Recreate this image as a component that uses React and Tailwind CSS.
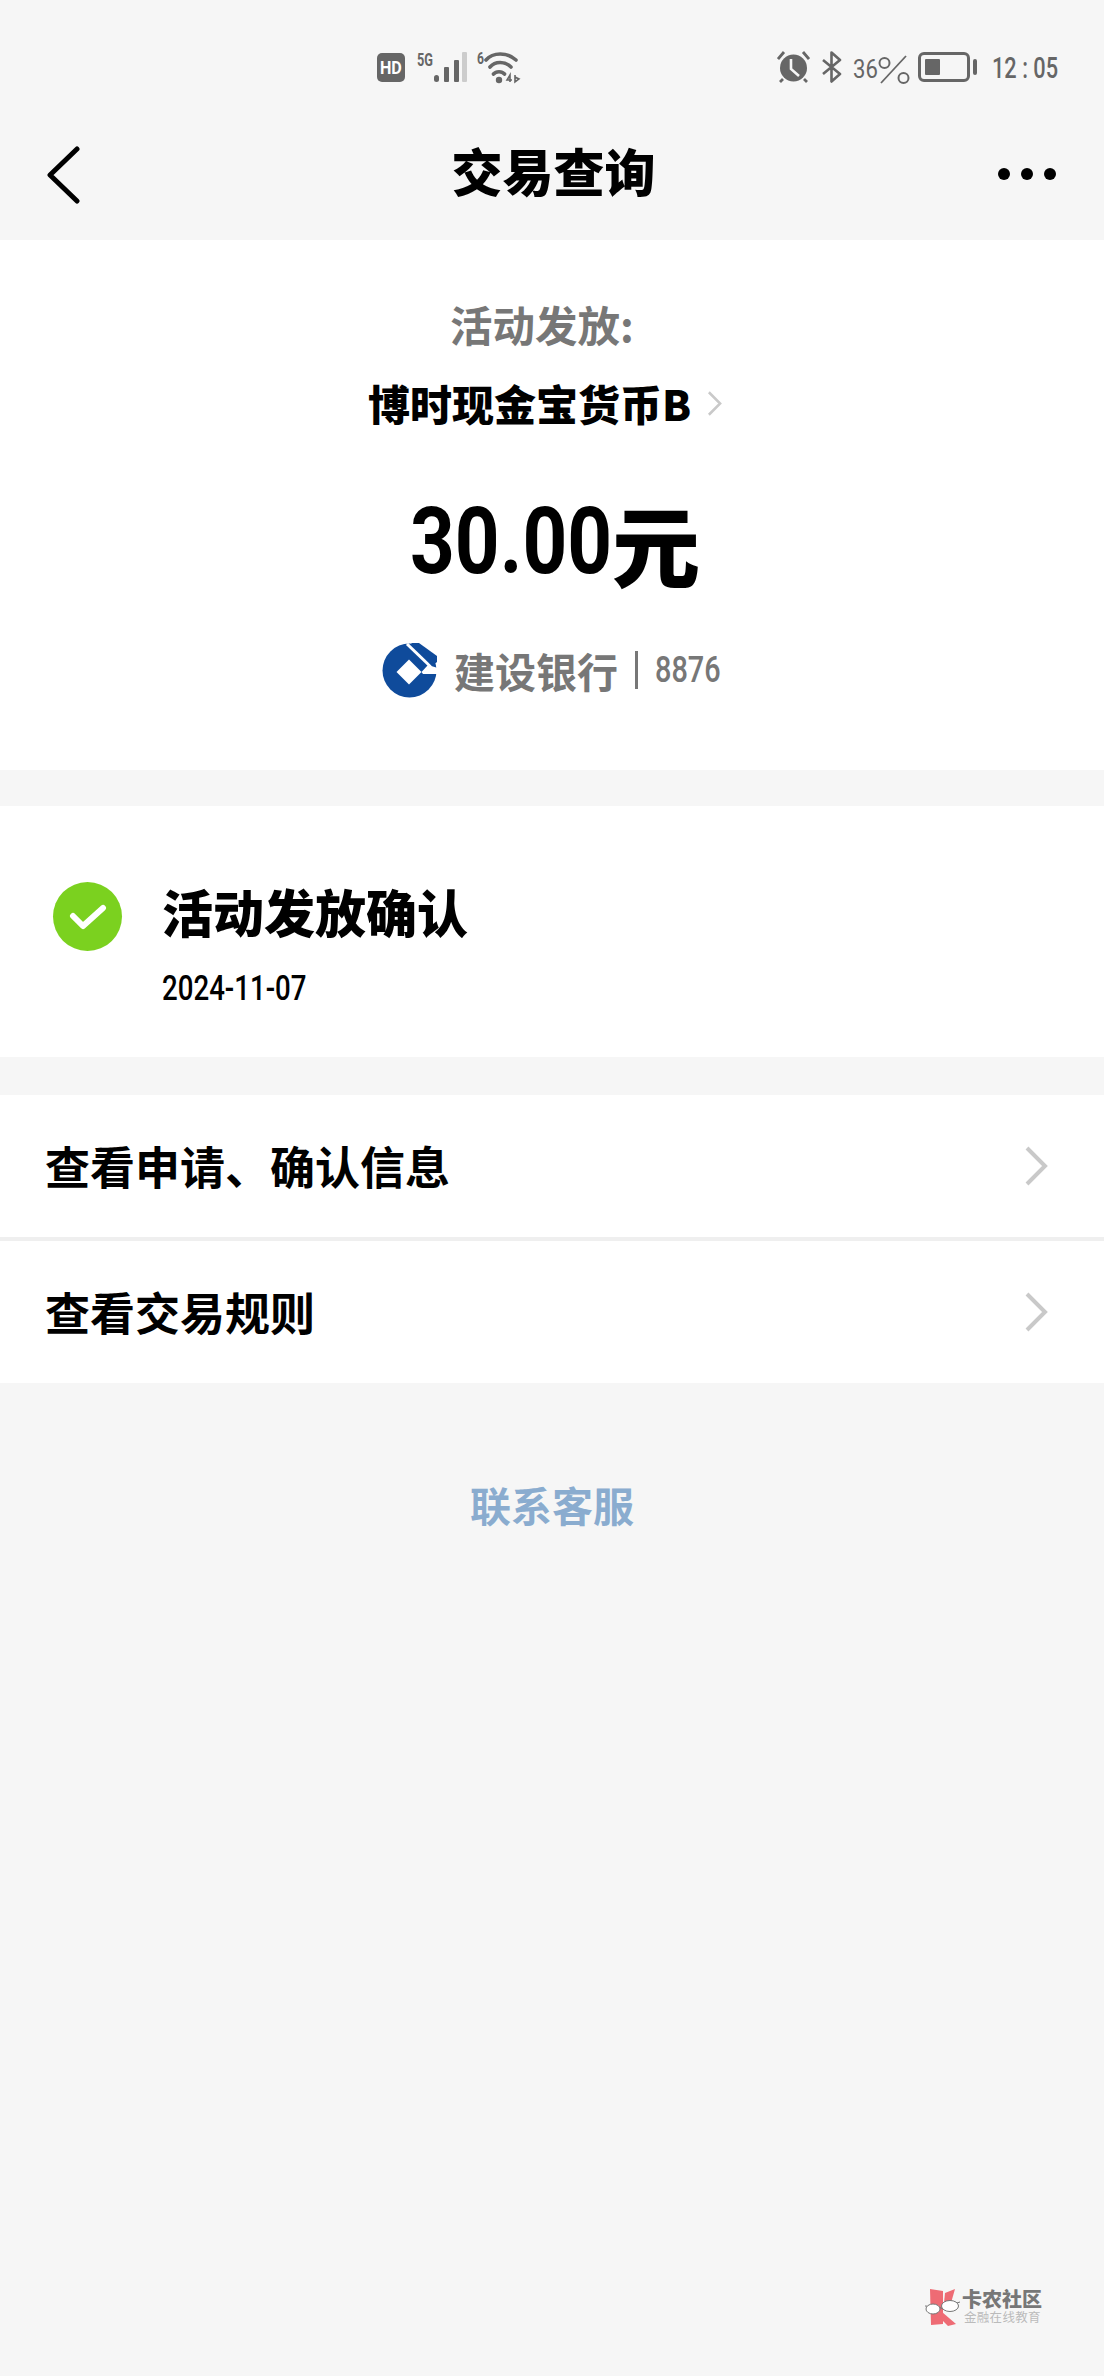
import React from 'react';

const cjk = "font-['Noto_Sans_CJK_SC','Noto_Sans',sans-serif]";
const digits = "font-['Roboto','Liberation_Sans','Noto_Sans_CJK_SC',sans-serif]";

// digits in the shot are condensed, so they get squeezed into a fixed width box
const Squeezed = ({ width, className, children }) => (
  <span className={`block overflow-visible whitespace-pre ${width}`}>
    <span className={`inline-block origin-left ${className}`}>{children}</span>
  </span>
);

const StatusBar = () => (
  <div className={`h-[96px] flex items-start pt-[51px] text-[#666] ${digits}`}>
    <div className="ml-[377px] mt-[2px] w-[28px] h-[29px] rounded-[5px] bg-[#666] text-white flex items-center justify-center">
      <span className="text-[19px] font-bold leading-[29px] scale-x-[0.85]">HD</span>
    </div>
    <svg className="ml-[12px] mt-[1px] overflow-visible" width="51" height="31" viewBox="0 0 51 31">
      <text x="0" y="14" fontSize="19" fontWeight="700" fill="#666" textLength="16" lengthAdjust="spacingAndGlyphs">5G</text>
      <rect x="17" y="23" width="5" height="7" rx="2.5" fill="#666" />
      <rect x="27" y="15" width="5" height="15" rx="1" fill="#666" />
      <rect x="37" y="8" width="5" height="22" rx="1" fill="#666" />
      <rect x="45" y="0" width="5" height="30" rx="1" fill="#ccc" />
    </svg>
    <svg className="ml-[9px] mt-[1px] overflow-visible" width="43" height="32" viewBox="0 0 43 32">
      <text x="0" y="12" fontSize="16" fontWeight="700" fill="#666" textLength="7" lengthAdjust="spacingAndGlyphs">6</text>
      <path d="M9 8 C16 0 30 0 39 8 M13 15 C18 9 28 9 34 15 M16.5 22 C19 19 25 19 27.5 22" fill="none" stroke="#666" strokeWidth="3.6" strokeLinecap="round" />
      <circle cx="22" cy="28" r="3.2" fill="#666" />
      <path d="M33 30 L33 23 L30 28 L35 28 M38 23 L38 30 L42 27 L38 25" fill="none" stroke="#666" strokeWidth="1.6" />
    </svg>
    <svg className="ml-[257px]" width="33" height="32" viewBox="0 0 33 32">
      <circle cx="16.5" cy="17" r="13.5" fill="#666" />
      <path d="M14 8 L14 18 L22 25" fill="none" stroke="#f6f6f6" strokeWidth="2.6" />
      <path d="M1 8 L7 1 M32 8 L26 1 M6 28 L3 31 M27 28 L30 31" stroke="#666" strokeWidth="2.8" />
    </svg>
    <svg className="ml-[11px]" width="21" height="32" viewBox="0 0 21 32">
      <path d="M2 9 L19 23 L10.5 30.5 L10.5 1.5 L19 9 L2 23" fill="none" stroke="#666" strokeWidth="2.6" strokeLinejoin="round" />
    </svg>
    <div className="ml-[11px] mt-[3px]">
      <Squeezed width="w-[25px]" className="text-[26px] leading-[30px] scale-x-[0.85]">36</Squeezed>
    </div>
    <svg className="mt-[3px]" width="32" height="30" viewBox="0 0 32 30">
      <circle cx="6.5" cy="9" r="5" fill="none" stroke="#666" strokeWidth="2" />
      <circle cx="25.5" cy="24" r="5" fill="none" stroke="#666" strokeWidth="2" />
      <path d="M28 2 L3 29" stroke="#666" strokeWidth="1.8" />
    </svg>
    <div className="ml-[8px] mt-[1px] w-[52px] h-[30px] rounded-[6px] border-[3px] border-[#666] p-[4px]">
      <div className="w-[15px] h-full bg-[#666] rounded-[1px]" />
    </div>
    <div className="ml-[3px] mt-[8px] w-[4px] h-[16px] bg-[#666] rounded-sm" />
    <div className="ml-[15px] mt-[2px]">
      <Squeezed width="w-[65px]" className="text-[29px] font-medium leading-[30px] scale-x-[0.75]">12 : 05</Squeezed>
    </div>
  </div>
);

const NavBar = () => (
  <div className="h-[144px] flex items-center pl-[46px] pr-[48px]">
    <div className="flex-1">
      <svg width="34" height="60" viewBox="0 0 34 60" className="mt-[14px]">
        <path d="M31 4 L4 30 L31 56" fill="none" stroke="#000" strokeWidth="5" strokeLinecap="round" strokeLinejoin="round" />
      </svg>
    </div>
    <div className={`${cjk} ml-[5px] text-[51px] font-black leading-[60px] text-black mt-[4px]`}>交易查询</div>
    <div className="flex-1 flex justify-end gap-[11px] mt-[12px]">
      <div className="w-[12px] h-[12px] rounded-full bg-black" />
      <div className="w-[12px] h-[12px] rounded-full bg-black" />
      <div className="w-[12px] h-[12px] rounded-full bg-black" />
    </div>
  </div>
);

const Chevron = ({ w = 24, h = 40, stroke = 4 }) => (
  <svg width={w} height={h} viewBox="0 0 24 40">
    <path d="M3 2 L21 20 L3 38" fill="none" stroke="#c9c9c9" strokeWidth={stroke} />
  </svg>
);

const BankLogo = () => (
  <svg width="55" height="55" viewBox="0 0 55 55">
    <circle cx="27.5" cy="27.5" r="27" fill="#0f4b9b" />
    <path d="M27 16.5 L39.5 29 L27 41.5 L14.5 29 Z" fill="#fff" />
    <path d="M25 1 L49 24" fill="none" stroke="#fff" strokeWidth="3" />
    <path d="M39.5 29 L46 22 L56 25 L56 31 L41 31 Z" fill="#fff" />
    <path d="M29 0 L37 0 L55 13 L55 19 L50 23 Z" fill="#0f4b9b" />
  </svg>
);

const Row = ({ label }) => (
  <div className="h-[142px] bg-white flex items-center justify-between pl-[45px] pr-[56px]">
    <span className={`${cjk} text-[45px] font-bold leading-[60px] text-black`}>{label}</span>
    <Chevron />
  </div>
);

const Watermark = () => (
  <div className="absolute left-[925px] top-[2288px] flex items-start">
    <svg width="38" height="38" viewBox="0 0 38 38">
      <path d="M5 1 L18 3 L18 36 L6 37 Z" fill="#ee6b74" />
      <path d="M19 15 L20 5 L30 1 L26 15 Z" fill="#ee6b74" />
      <path d="M17 24 L31 36 L23 38 L15 30 Z" fill="#ee6b74" />
      <path d="M0 18 L14 19 L18 21 L22 18 L35 14" fill="none" stroke="#777" strokeWidth="1" />
      <ellipse cx="8" cy="21" rx="7" ry="5" fill="#fff" stroke="#777" strokeWidth="1" />
      <ellipse cx="25" cy="18" rx="8.5" ry="5.5" fill="#fff" stroke="#777" strokeWidth="1" />
    </svg>
    <div className={`${cjk} -ml-[1px] flex flex-col`}>
      <span className="text-[20px] font-black leading-[22px] text-[#777]">卡农社区</span>
      <span className="ml-[2px] text-[12.5px] tracking-[0.3px] leading-[14px] text-[#bbb] whitespace-nowrap">金融在线教育</span>
    </div>
  </div>
);

const App = () => (
  <div className="relative w-full h-[2376px] bg-[#f6f6f6] overflow-hidden">
    <StatusBar />
    <NavBar />

    <div className="h-[530px] bg-white flex flex-col items-center">
      <div className={`${cjk} mt-[54px] text-[42.5px] font-bold leading-[60px] text-[#777] -ml-[20px]`}>活动发放:</div>
      <div className="mt-[19px] flex items-center -ml-[14px]">
        <span className={`${cjk} text-[42px] font-black leading-[60px] text-black`}>博时现金宝货币B</span>
        <span className="ml-[16px]"><Chevron w={15} h={27} /></span>
      </div>
      <div className="mt-[59px] ml-[6px] flex items-center text-black">
        <Squeezed width="w-[193px]" className={`${digits} text-[92px] font-bold leading-[100px] scale-x-[0.85]`}>30.00</Squeezed>
        <span className={`${cjk} ml-[9px] text-[88px] font-black leading-[100px]`}>元</span>
      </div>
      <div className="mt-[48px] flex items-center -ml-[3px] text-[#777]">
        <BankLogo />
        <span className={`${cjk} ml-[17px] text-[41px] font-bold leading-[60px]`}>建设银行</span>
        <div className="ml-[17px] w-[3px] h-[38px] bg-[#777]" />
        <span className="ml-[17px]">
          <Squeezed width="w-[64px]" className={`${digits} text-[37px] font-medium leading-[60px] scale-x-[0.78]`}>8876</Squeezed>
        </span>
      </div>
    </div>

    <div className="mt-[36px] h-[251px] bg-white flex items-start pl-[53px] pt-[76px]">
      <div className="w-[69px] h-[69px] rounded-full bg-[#7bd11f] flex items-center justify-center">
        <svg width="38" height="28" viewBox="0 0 38 28">
          <path d="M4 13 L14 23 L34 5" fill="none" stroke="#fff" strokeWidth="6" strokeLinecap="round" strokeLinejoin="round" />
        </svg>
      </div>
      <div className="ml-[40px] -mt-[6px] flex flex-col">
        <span className={`${cjk} text-[51px] font-black leading-[70px] text-black`}>活动发放确认</span>
        <span className="mt-[23px]">
          <Squeezed width="w-[143px]" className={`${digits} text-[35px] font-medium leading-[40px] text-black scale-x-[0.79]`}>2024-11-07</Squeezed>
        </span>
      </div>
    </div>

    <div className="mt-[38px] flex flex-col gap-[4px] bg-[#efefef]">
      <Row label="查看申请、确认信息" />
      <Row label="查看交易规则" />
    </div>

    <div className={`${cjk} mt-[91px] text-center text-[41px] font-bold leading-[60px] text-[#8aaccf]`}>联系客服</div>

    <Watermark />
  </div>
);

export default App;
